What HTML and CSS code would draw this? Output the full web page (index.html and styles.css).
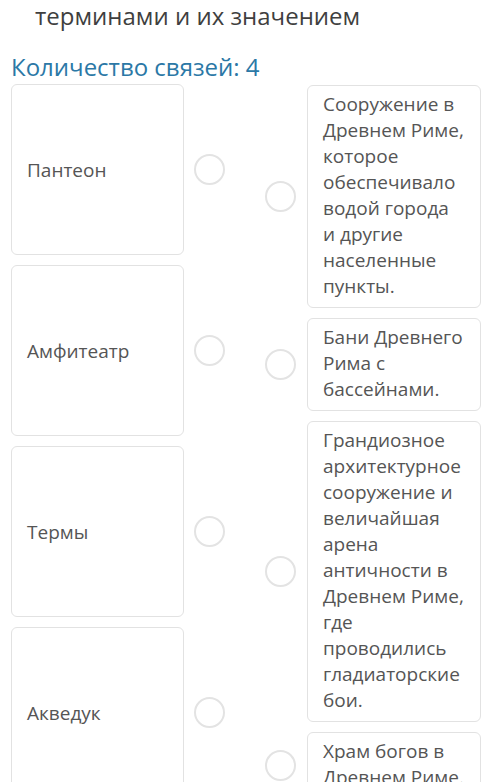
FILE: index.html
```html
<!DOCTYPE html>
<html>
  <head>
    <title>Соответствие</title>
    <link rel="stylesheet" href="styles.css">
  </head>
  <body>
    <h2 class="question">терминами и их значением</h2>
    <div class="links-count">Количество связей: 4</div>

    <div class="match">
      <div class="column terms">
        <div class="row">
          <div class="card term">Пантеон</div>
          <span class="dot"></span>
        </div>
        <div class="row">
          <div class="card term">Амфитеатр</div>
          <span class="dot"></span>
        </div>
        <div class="row">
          <div class="card term">Термы</div>
          <span class="dot"></span>
        </div>
        <div class="row">
          <div class="card term">Акведук</div>
          <span class="dot"></span>
        </div>
      </div>

      <div class="column meanings">
        <div class="row">
          <span class="dot"></span>
          <div class="card meaning">Сооружение в Древнем Риме, которое обеспечивало водой города и другие населенные пункты.</div>
        </div>
        <div class="row">
          <span class="dot"></span>
          <div class="card meaning">Бани Древнего Рима с бассейнами.</div>
        </div>
        <div class="row">
          <span class="dot"></span>
          <div class="card meaning">Грандиозное архитектурное сооружение и величайшая арена античности в Древнем Риме, где проводились гладиаторские бои.</div>
        </div>
        <div class="row">
          <span class="dot"></span>
          <div class="card meaning">Храм богов в Древнем Риме.</div>
        </div>
      </div>
    </div>
  </body>
</html>
```

FILE: styles.css
```css
body {
  margin: 0;
  padding: 0 11px;
  font-family: "Open Sans", Arial, sans-serif;
  color: #555;
  background: #fff;
}
.question {
  margin: 0;
  padding: 0 0 0 24px;
  font-size: 24px;
  font-weight: normal;
  line-height: 32px;
  color: #3f3f3f;
}
.links-count {
  margin-top: 20px;
  font-size: 24px;
  line-height: 30px;
  color: #2b78a6;
}
.match {
  display: flex;
  margin-top: 2px;
}
.column {
  display: flex;
  flex-direction: column;
  gap: 10px;
}
.terms {
  width: 214px;
}
.meanings {
  margin-left: 40px;
  padding-top: 1px;
}
.row {
  display: flex;
  align-items: center;
}
.card {
  box-sizing: border-box;
  background: #fff;
  border: 1.5px solid #e2e2e2;
  border-radius: 6px;
  font-size: 19px;
  line-height: 26px;
}
.term {
  width: 174px;
  height: 171px;
  display: flex;
  align-items: center;
  padding: 0 15px;
}
.meaning {
  width: 174px;
  padding: 5px 15.5px 8px 15px;
}
.dot {
  flex: none;
  width: 27px;
  height: 27px;
  border: 2px solid #e3e3e3;
  border-radius: 50%;
}
.terms .dot {
  margin-left: 10px;
}
.meanings .dot {
  margin-right: 11px;
}
```
